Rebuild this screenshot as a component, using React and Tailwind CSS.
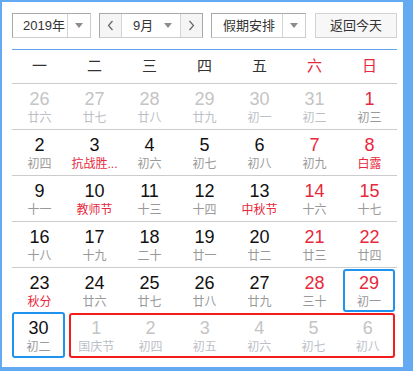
import React from 'react';

const WEEK = ['一', '二', '三', '四', '五', '六', '日'];

// o: other month, r: red number, f: festival (red lunar text)
const ROWS = [
    [
        { d: 26, l: '廿六', o: true },
        { d: 27, l: '廿七', o: true },
        { d: 28, l: '廿八', o: true },
        { d: 29, l: '廿九', o: true },
        { d: 30, l: '初一', o: true },
        { d: 31, l: '初二', o: true },
        { d: 1, l: '初三', r: true },
    ],
    [
        { d: 2, l: '初四' },
        { d: 3, l: '抗战胜...', f: true },
        { d: 4, l: '初六' },
        { d: 5, l: '初七' },
        { d: 6, l: '初八' },
        { d: 7, l: '初九', r: true },
        { d: 8, l: '白露', r: true, f: true },
    ],
    [
        { d: 9, l: '十一' },
        { d: 10, l: '教师节', f: true },
        { d: 11, l: '十三' },
        { d: 12, l: '十四' },
        { d: 13, l: '中秋节', f: true },
        { d: 14, l: '十六', r: true },
        { d: 15, l: '十七', r: true },
    ],
    [
        { d: 16, l: '十八' },
        { d: 17, l: '十九' },
        { d: 18, l: '二十' },
        { d: 19, l: '廿一' },
        { d: 20, l: '廿二' },
        { d: 21, l: '廿三', r: true },
        { d: 22, l: '廿四', r: true },
    ],
];

const ROW5 = [
    { d: 23, l: '秋分', f: true },
    { d: 24, l: '廿六' },
    { d: 25, l: '廿七' },
    { d: 26, l: '廿八' },
    { d: 27, l: '廿九' },
    { d: 28, l: '三十', r: true },
];

const OCT = [
    { d: 1, l: '国庆节', o: true },
    { d: 2, l: '初四', o: true },
    { d: 3, l: '初五', o: true },
    { d: 4, l: '初六', o: true },
    { d: 5, l: '初七', o: true },
    { d: 6, l: '初八', o: true },
];

const Caret = () => (
    <svg width="8" height="5" viewBox="0 0 8 5">
        <polygon points="0,0 8,0 4,5" fill="#8c8c8c" />
    </svg>
);

const Chevron = ({ right }) => (
    <svg width="7" height="11" viewBox="0 0 7 11">
        <path
            d={right ? 'M1.5 1 L5.5 5.5 L1.5 10' : 'M5.5 1 L1.5 5.5 L5.5 10'}
            fill="none"
            stroke="#666"
            strokeWidth="1.2"
        />
    </svg>
);

const Day = ({ d, l, o, r, f, top = 'pt-[5px]' }) => {
    const numColor = o ? 'text-[#c4c4c4]' : r ? 'text-[#e8283c]' : 'text-[#111]';
    const lunColor = o ? 'text-[#bcc0c6]' : f ? 'text-[#e8283c]' : 'text-[#999]';
    return (
        <div className={`flex flex-col items-center ${top}`}>
            <span className={`text-[18px] leading-[20px] ${numColor}`}>{d}</span>
            <span className={`mt-[2px] text-[12px] leading-[14px] whitespace-nowrap ${lunColor}`}>{l}</span>
        </div>
    );
};

export default function App() {
    return (
        <div
            className="w-[413px] h-[371px] bg-[#64aaf2] pt-[2px] pl-[2px]"
            style={{ fontFamily: '"Liberation Sans", "Noto Sans CJK SC", sans-serif' }}
        >
            <div className="w-[401px] h-[365px] bg-white pl-[10px] pr-[6px] pt-[11px]">
                {/* toolbar */}
                <div className="flex h-[25px] text-[13px] text-[#333]">
                    <div className="flex w-[79px] border border-[#a8a8a8] border-r-[#cdcdcd] border-b-[#cdcdcd]">
                        <div className="w-[55px] flex items-center pl-[10px] border-r border-[#d4d4d4]">2019年</div>
                        <div className="flex-1 flex items-center justify-center"><Caret /></div>
                    </div>
                    <div className="ml-[8px] flex w-[104px] border border-[#a8a8a8] border-b-[#cdcdcd]">
                        <div className="w-[22px] bg-[#f5f5f5] flex items-center justify-center border-r border-[#d4d4d4]"><Chevron /></div>
                        <div className="flex-1 flex items-center pl-[11px] pr-[8px] justify-between">
                            <span>9月</span>
                            <Caret />
                        </div>
                        <div className="w-[22px] bg-[#f5f5f5] flex items-center justify-center border-l border-[#d4d4d4]"><Chevron right /></div>
                    </div>
                    <div className="ml-[8px] flex w-[95px] border border-[#a8a8a8] border-r-[#cdcdcd] border-b-[#cdcdcd]">
                        <div className="w-[71px] flex items-center pl-[11px] border-r border-[#d4d4d4]">假期安排</div>
                        <div className="flex-1 flex items-center justify-center"><Caret /></div>
                    </div>
                    <button className="ml-[9px] w-[82px] bg-[#f7f7f7] border border-[#d2d2d2] flex items-center justify-center">
                        返回今天
                    </button>
                </div>

                <div className="mt-[11px] h-px bg-[#5ea5ee]" />

                {/* week header */}
                <div className="grid grid-cols-7 h-[34px] border-b border-[#cccccc] text-[15px]">
                    {WEEK.map((w, i) => (
                        <div
                            key={w}
                            className={`flex items-center justify-center ${i > 4 ? 'text-[#e8283c]' : 'text-[#333]'}`}
                        >
                            {w}
                        </div>
                    ))}
                </div>

                {ROWS.map((row, ri) => (
                    <div key={ri} className="grid grid-cols-7 h-[46px] border-b border-[#cccccc]">
                        {row.map((c, ci) => <Day key={ci} {...c} />)}
                    </div>
                ))}

                <div className="grid grid-cols-7 h-[45px]">
                    {ROW5.map((c, ci) => <Day key={ci} {...c} />)}
                    <div className="p-[1px] pr-[2px]">
                        <div className="h-full rounded-[3px] ring-2 ring-inset ring-[#1e94f0]">
                            <Day d={29} l="初一" r top="pt-[4px]" />
                        </div>
                    </div>
                </div>

                <div className="grid grid-cols-7 h-[46px]">
                    <div className="pr-[2px] -mt-[1px]">
                        <div className="h-[46px] rounded-[3px] ring-2 ring-inset ring-[#1e94f0]">
                            <Day d={30} l="初二" top="pt-[6px]" />
                        </div>
                    </div>
                    <div className="col-span-6 ml-[2px] mr-[2px] h-[45px] rounded-[3px] ring-2 ring-inset ring-[#f51c1c] grid grid-cols-6">
                        {OCT.map((c, ci) => <Day key={ci} {...c} />)}
                    </div>
                </div>
            </div>
        </div>
    );
}
